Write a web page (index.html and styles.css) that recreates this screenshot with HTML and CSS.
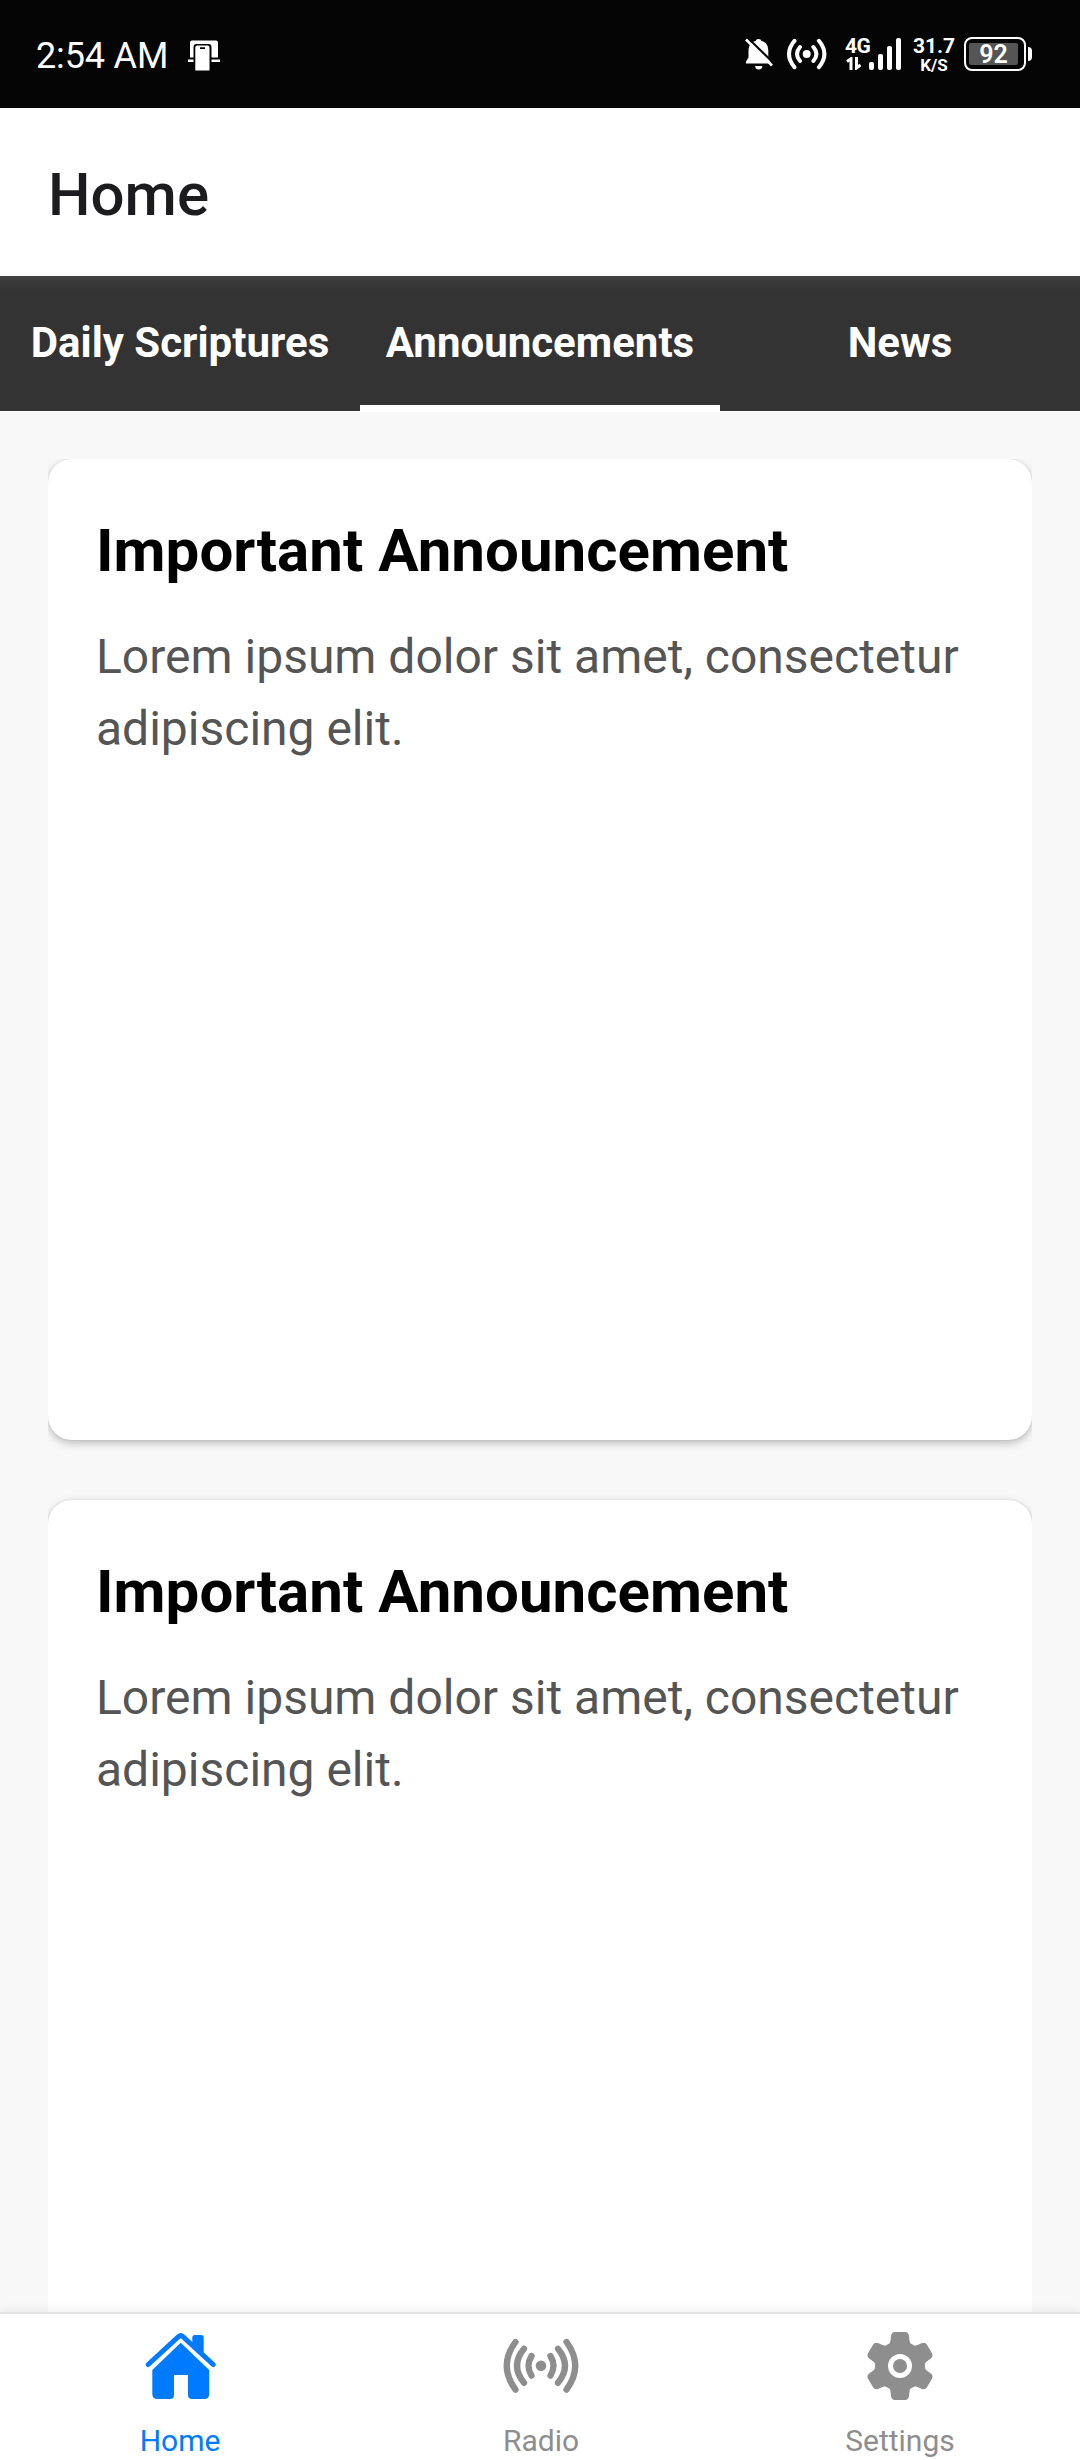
FILE: index.html
```html
<!DOCTYPE html>
<html lang="en">
<head>
<meta charset="utf-8">
<title>Home</title>
<link rel="stylesheet" href="styles.css">
</head>
<body>
<div class="app">
  <div class="status">
    <span class="clock">2:54 AM</span>
    <svg class="cast" width="32" height="32" viewBox="0 0 32 32" fill="#fff"><path d="M4 .5h24q2 0 2 2V17.500h-6.500V7q0-3-3-3h-12q-3 0-3 3v10.500H2V2.500q0-2 2-2zM0 19.500h5.500V22H0zM23.500 19.500H32V22h-8.500z"/><path fill-rule="evenodd" d="M9.500 5.500h10q2 0 2 2V30.500H7.300V7.500q0-2 2.200-2zM12 7.300v1.800h5V7.300z"/></svg>
    <div class="status-right">
      <svg class="bell" width="28" height="32" viewBox="0 0 28 32"><path fill="#fff" d="M1 25.500v-2l2.500-4V13C3.500 7 6.500 3.800 10.500 3Q11 1 13.500 1T16.500 3C20.500 3.800 23.300 7 23.300 13v7l2.200 3.500v2zM10 28h7.500q-.5 3.500-3.750 3.500T10 28z"/><path stroke="#050505" stroke-width="2.200" d="M2.800 0L28.500 25"/><path stroke="#fff" stroke-width="2.600" d="M1 1.500l26 26"/></svg>
      <svg class="hotspot" width="42" height="32" viewBox="0 0 42 32" fill="none" stroke="#fff" stroke-width="4" stroke-linecap="round"><circle cx="21.700" cy="16" r="4" fill="#fff" stroke="none"/><path d="M15 9Q9 16 15 23M28.400 9Q34.400 16 28.400 23M9.500 2.800Q-1.500 16 9.500 29.200M33.900 2.800Q44.900 16 33.900 29.200"/></svg>
      <div class="network"><span>4G</span><svg width="16" height="13" viewBox="0 0 16 13" fill="none" stroke="#fff" stroke-width="3"><path d="M1 4.500L5 1.800V13M10.500 0v11l4-3"/></svg></div>
      <svg class="signal" width="32" height="32" viewBox="0 0 32 32" fill="#fff"><rect y="24" width="5" height="8" rx="2"/><rect x="9" y="16" width="5" height="16" rx="2"/><rect x="18" y="8" width="5" height="24" rx="2"/><rect x="27" width="5" height="32" rx="2"/></svg>
      <div class="speed"><span class="rate">31.7</span><span class="unit">K/S</span></div>
      <div class="battery"><span>92</span></div><i class="battery-tip"></i>
    </div>
  </div>
  <header class="header"><h1>Home</h1></header>
  <div class="tabs">
    <div class="tab">Daily Scriptures</div>
    <div class="tab active">Announcements</div>
    <div class="tab">News</div>
  </div>
  <main class="feed">
    <div class="list">
      <article class="card"><h2>Important Announcement</h2><p>Lorem ipsum dolor sit amet, consectetur adipiscing elit.</p></article>
      <article class="card"><h2>Important Announcement</h2><p>Lorem ipsum dolor sit amet, consectetur adipiscing elit.</p></article>
    </div>
  </main>
  <nav class="nav">
    <div class="item current">
      <svg width="72" height="72" viewBox="0 0 72 72" fill="currentColor"><path d="M36.700 12.700L65.200 40V64q0 5-5 5H48q-4 0-4-4V45H30v20q0 4-4 4H13.300q-5 0-5-5V40z"/><path d="M48.300 17V7.500q0-2.500 2.500-2.500h6.400q2.500 0 2.500 2.500V28z"/><path fill="none" stroke="currentColor" stroke-width="5" stroke-linecap="round" stroke-linejoin="round" d="M4.200 34.500L34.500 6.700q2.200-2 4.400 0L69.200 34.500"/></svg>
      <span>Home</span>
    </div>
    <div class="item radio">
      <svg width="76" height="72" viewBox="0 0 76 72" fill="none" stroke="currentColor" stroke-width="6.300" stroke-linecap="round"><circle cx="38" cy="35.800" r="5.300" fill="currentColor" stroke="none"/><path d="M28.500 26Q22.500 35.800 28.500 45.600M47.500 26Q53.500 35.800 47.500 45.600M21 18.800Q7 35.800 21 52.800M55 18.800Q69 35.800 55 52.800M12.500 12Q-5 35.800 12.500 59.600M63.500 12Q81 35.800 63.500 59.600"/></svg>
      <span>Radio</span>
    </div>
    <div class="item">
      <svg width="72" height="72" viewBox="0 0 72 72"><g fill="currentColor"><circle cx="36" cy="36" r="25"/><path id="tooth" d="M24 15q2-1 2.500-4l.5-5q.5-4 4-4h10q3.500 0 4 4l.5 5q.5 3 2.500 4v42q-2 1-2.500 4l-.5 5q-.5 4-4 4H31q-3.500 0-4-4l-.5-5q-.5-3-2.500-4z"/><use href="#tooth" transform="rotate(60 36 36)"/><use href="#tooth" transform="rotate(120 36 36)"/></g><circle cx="36" cy="36" r="9.500" fill="none" stroke="#fff" stroke-width="5"/></svg>
      <span>Settings</span>
    </div>
  </nav>
</div>
</body>
</html>
```
FILE: styles.css
```css
* { box-sizing: border-box; }
body { margin: 0; font-family: Roboto, sans-serif; }
h1, h2, p { margin: 0; }
svg { display: block; flex: none; }
.app { width: 1080px; height: 2460px; display: flex; flex-direction: column; overflow: hidden; background: #f8f8f8; }
.status { height: 108px; flex: none; background: #050505; color: #fff; display: flex; align-items: flex-start; padding: 39px 48px 0 36px; }
.clock { font-size: 36px; line-height: 34px; width: 152px; white-space: nowrap; letter-spacing: -0.15px; }
.cast { margin-top: 1px; }
.status-right { margin-left: auto; display: flex; align-items: flex-start; margin-top: -1px; }
.hotspot { margin: 0 18px 0 12px; }
.network { width: 24px; display: flex; flex-direction: column; font-size: 21px; line-height: 17px; font-weight: 700; gap: 2px; letter-spacing: -0.5px; }
.network svg { margin-left: 1px; }
.speed { display: flex; flex-direction: column; align-items: center; width: 40px; margin: 0 10px 0 13px; font-weight: 700; line-height: 16px; gap: 3px; }
.rate { font-size: 21px; }
.unit { font-size: 17px; }
.battery { width: 62px; height: 34px; border: 2.500px solid #fff; border-radius: 8px; padding: 4px 6px 3px 3px; margin-top: -1px; }
.battery span { display: block; height: 22px; border-radius: 2px; background: #555; font-size: 25px; line-height: 23px; font-weight: 600; text-align: center; }
.battery-tip { width: 4px; height: 14px; margin: 9px 0 0 2px; border-radius: 0 4px 4px 0; background: #fff; }
.header { height: 168px; flex: none; background: #fff; display: flex; align-items: center; padding: 6px 48px 0; }
.header h1 { font-size: 60px; line-height: 70px; font-weight: 500; color: #1c1c1e; }
.tabs { height: 135px; flex: none; display: grid; grid-template-columns: repeat(3, 1fr); background: linear-gradient(#424242, #383838 7px, #333 18px); }
.tab { color: #fff; font-size: 42px; line-height: 49px; font-weight: 700; text-align: center; padding-top: 42px; white-space: nowrap; }
.tab.active { border-bottom: 6px solid #fff; }
.feed { flex: 1; min-height: 0; overflow: hidden; padding: 47px 48px 0; border-top: 1px solid #fff; }
.list { display: flex; flex-direction: column; gap: 60px; overflow: hidden; }
.card { height: 981px; flex: none; background: #fff; border-radius: 24px; padding: 57px 48px; box-shadow: 0 3px 8px rgba(0,0,0,.26), 0 0 2px rgba(0,0,0,.08); }
.card h2 { font-size: 60px; line-height: 70px; font-weight: 700; color: #000; white-space: nowrap; letter-spacing: .04px; }
.card p { margin-top: 35px; font-size: 48px; line-height: 72px; color: #555; }
.nav { height: 148px; flex: none; background: #fff; border-top: 2px solid #e4e4e4; display: grid; grid-template-columns: repeat(3, 1fr); position: relative; box-shadow: 0 -3px 9px rgba(0,0,0,.06); }
.item { color: #8e8e8f; display: flex; flex-direction: column; align-items: center; padding-top: 16px; }
.item.radio { padding-left: 2px; }
.item span { font-size: 30px; line-height: 35px; margin-top: 21px; }
.item.current { color: #007aff; }
```
